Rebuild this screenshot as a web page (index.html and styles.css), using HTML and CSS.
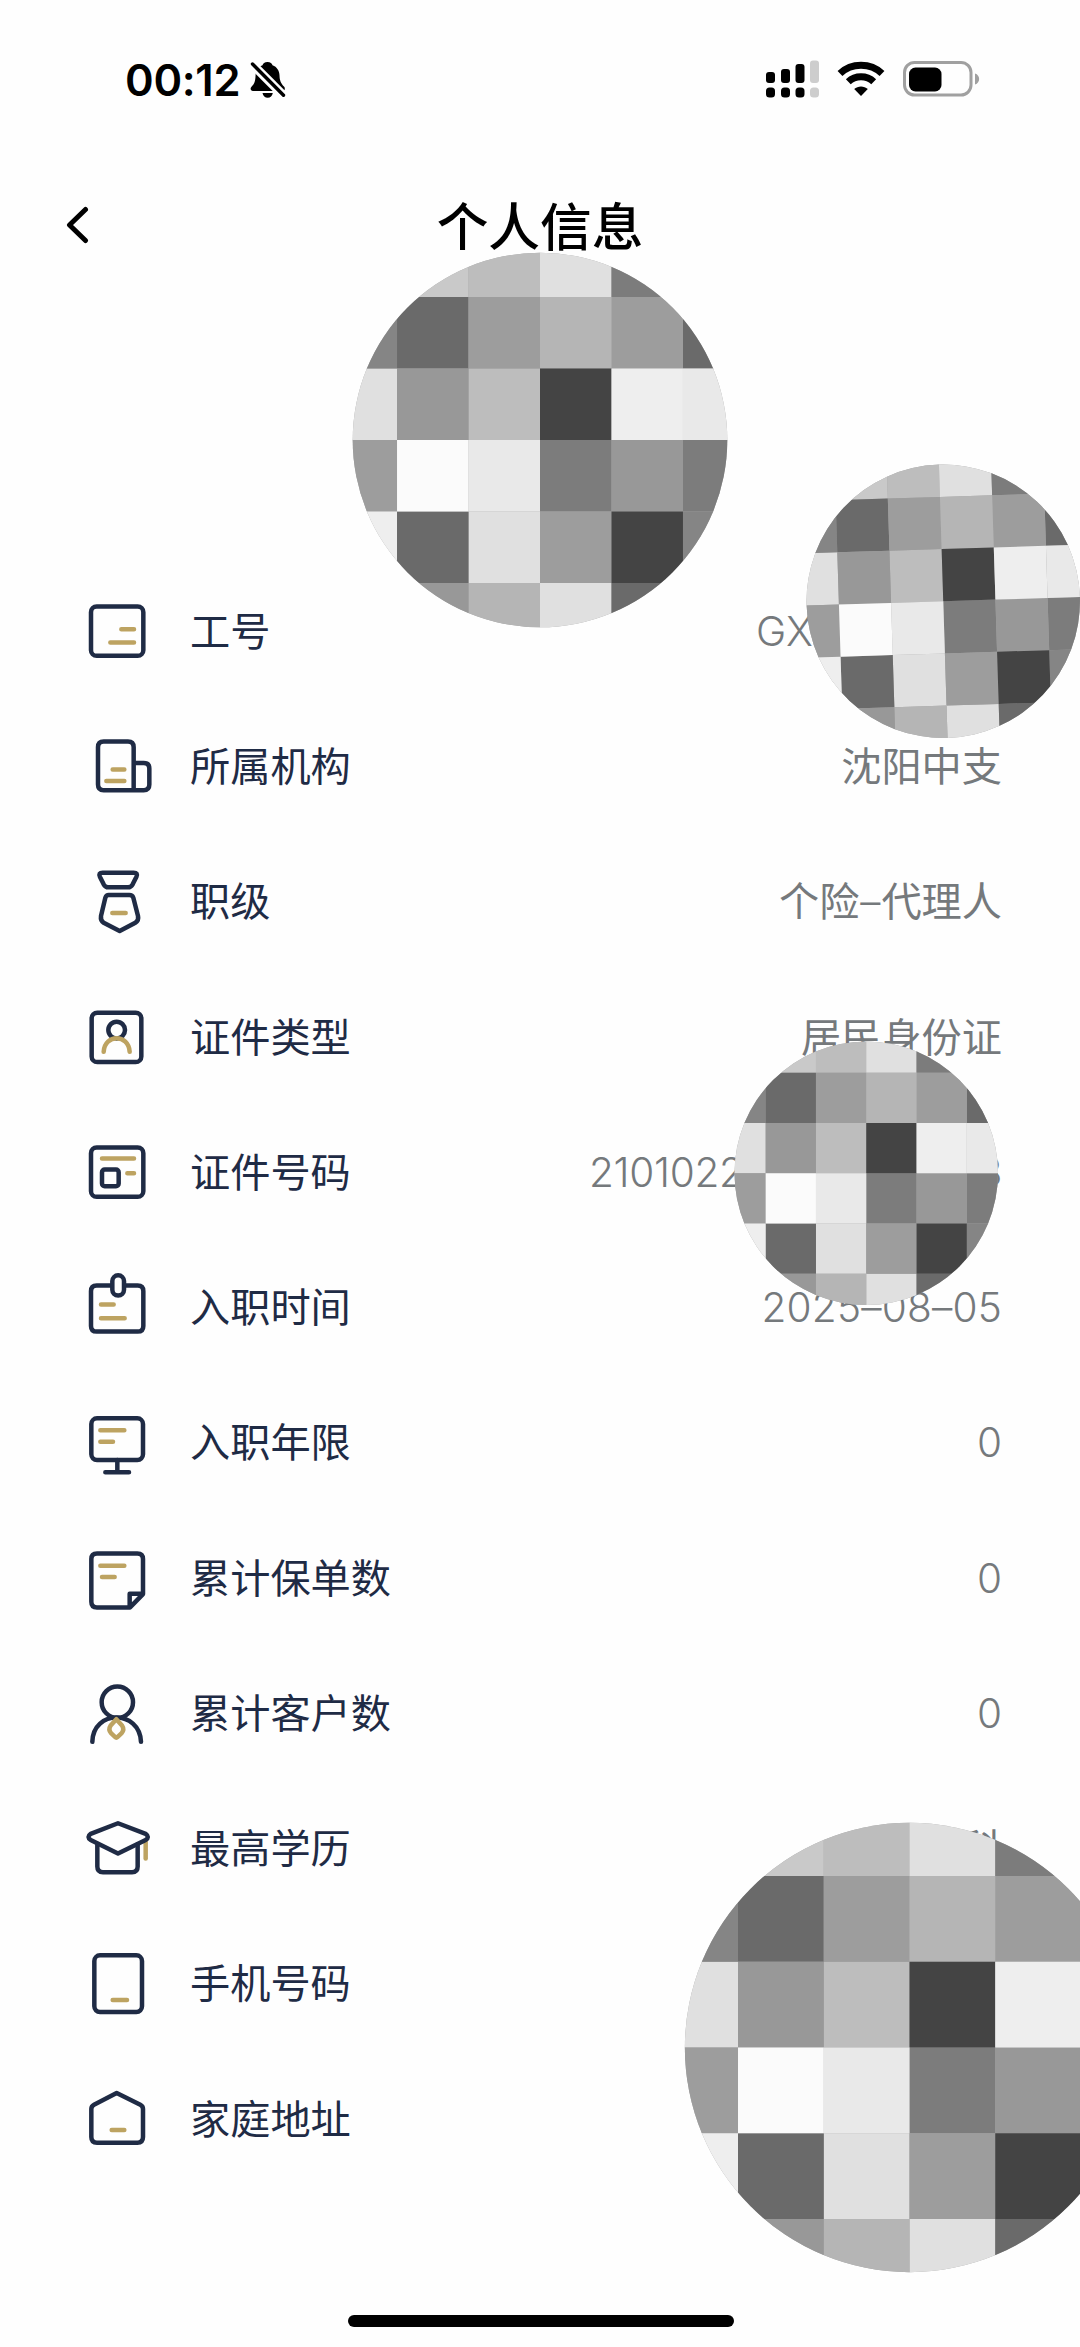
FILE: index.html
```html
<!DOCTYPE html>
<html lang="zh-CN">
<head>
<meta charset="utf-8">
<title>个人信息</title>
<link rel="stylesheet" href="styles.css">
</head>
<body>
<svg class="defs" aria-hidden="true">
  <symbol id="mosaic" viewBox="-2.63 -2.63 5.26 5.26">
    <clipPath id="disc"><circle r="2.62"/></clipPath>
    <g clip-path="url(#disc)">
      <rect x="-3" y="-3" width="6" height="6" fill="#a4a4a4"/>
      <path fill="#c9c9c9" d="M-2-3h1v1h-1z"/>
      <path fill="#bdbdbd" d="M-1-3h1v1h-1zM-1-1h1v1h-1z"/>
      <path fill="#e0e0e0" d="M0-3h1v1h-1zM-3-1h1v1h-1zM-1 1h1v1h-1zM0 2h1v1h-1z"/>
      <path fill="#7c7c7c" d="M1-3h1v1h-1zM0 0h1v1h-1zM2 0h1v1h-1z"/>
      <path fill="#858585" d="M-3-2h1v1h-1zM2 1h1v1h-1z"/>
      <path fill="#6a6a6a" d="M-2-2h1v1h-1zM2-2h1v1h-1zM-2 1h1v1h-1zM1 2h1v1h-1z"/>
      <path fill="#9d9d9d" d="M-1-2h1v1h-1zM1-2h1v1h-1zM-3 0h1v1h-1zM0 1h1v1h-1z"/>
      <path fill="#b5b5b5" d="M0-2h1v1h-1zM-1 2h1v1h-1z"/>
      <path fill="#989898" d="M-2-1h1v1h-1zM1 0h1v1h-1zM-2 2h1v1h-1z"/>
      <path fill="#444" d="M0-1h1v1h-1zM1 1h1v1h-1z"/>
      <path fill="#eee" d="M1-1h1v1h-1zM-3 1h1v1h-1z"/>
      <path fill="#e9e9e9" d="M2-1h1v1h-1zM-1 0h1v1h-1z"/>
      <path fill="#fbfbfb" d="M-2 0h1v1h-1z"/>
    </g>
  </symbol>
</svg>
<div class="screen">
  <header class="status">
    <span class="clock">00:12</span>
    <svg class="bell" viewBox="0 0 36 38">
      <path d="M17.500 1c3 0 4.500 1.600 5 3.200 4.500 1.600 6.800 5.500 7 10 .2 5 1 7.800 4.700 11.500.6.700.7 1.600.5 2.800-.2.900-.8 1.400-1.800 1.400H3c-2.400 0-3.200-2.600-1.500-4.200C4.700 22.600 5.300 20 5.600 14c.2-4.500 2.400-8.200 6.900-9.800.5-1.600 2-3.200 5-3.200zM12.500 32h10.300c-.6 3-2.400 4.700-5.100 4.700S13.100 35 12.500 32z"/>
      <path class="cut" d="M2 3l33 33"/>
      <path class="slash" d="M2.500 3l31 31.300"/>
    </svg>
    <svg class="signal" viewBox="0 0 54 38">
      <rect x="0" y="12" width="9" height="11" rx="3"/><rect x="15" y="9" width="9" height="14" rx="3"/><rect x="29.500" y="4" width="9" height="19" rx="3"/><rect class="off" x="44" y="0.500" width="9" height="22.500" rx="3"/>
      <rect x="0" y="27.500" width="9" height="10" rx="3.500"/><rect x="15" y="27.500" width="9" height="10" rx="3.500"/><rect x="29.500" y="27.500" width="9" height="10" rx="3.500"/><rect class="off" x="44" y="27.500" width="9" height="10" rx="3.500"/>
    </svg>
    <svg class="wifi" viewBox="0 0 48 36">
      <path class="arc" d="M3 12.500C14.500 1.500 33.500 1.500 45 12.500M11.300 20.800c7-6.700 18.400-6.700 25.400 0"/>
      <path d="M24 35l-6.800-6.900c3.800-3.400 9.800-3.400 13.600 0z"/>
    </svg>
    <svg class="battery" viewBox="0 0 78 36">
      <rect class="case" x="1.500" y="1.500" width="66.500" height="32.500" rx="10"/>
      <rect x="6" y="6.500" width="32.500" height="24" rx="6.500"/>
      <path class="nub" d="M72 12.500c5.500 1.500 5.500 9.500 0 11z"/>
    </svg>
  </header>
  <nav class="titlebar">
    <svg class="back" viewBox="0 0 24 40"><path d="M20.500 4.500L4.500 20l16 15.500"/></svg>
    <h1>个人信息</h1>
  </nav>
  <main class="list">
    <div class="row">
      <svg class="icon" viewBox="30 44.400 216 216"><rect x="63" y="79" width="157" height="148" rx="17"/><path class="gold" d="M154 147h38M121 187h71"/></svg>
      <span class="label">工号</span><span class="value num gx">GX</span>
    </div>
    <div class="row">
      <svg class="icon" viewBox="30 450.200 216 216"><path d="M101 485h73q17 0 17 17v129H101q-17 0-17-17V502q0-17 17-17zM191 549h30q17 0 17 17v48q0 17-17 17h-30"/><path class="gold" d="M128 569h35M109 603h54"/></svg>
      <span class="label">所属机构</span><span class="value">沈阳中支</span>
    </div>
    <div class="row">
      <svg class="icon" viewBox="30 855.900 216 216"><path d="M98 879h93q14 0 8 13l-11 22q-5 9-14 9h-59q-9 0-14-9l-11-22q-6-13 8-13zM116 946h62q9 0 12 8l14 55q3 14-8 20l-47 25-48-25q-10-6-8-20l13-55q3-8 10-8z"/><path class="gold" d="M127 1000h40"/></svg>
      <span class="label">职级</span><span class="value">个险<span class="dash">–</span>代理人</span>
    </div>
    <div class="row">
      <svg class="icon" viewBox="30 61.700 216 216"><rect x="65" y="97" width="149" height="148" rx="17"/><circle cx="140" cy="149" r="25"/><path class="gold" d="M101 214C104 160 176 160 179 214"/></svg>
      <span class="label">证件类型</span><span class="value">居民身份证</span>
    </div>
    <div class="row">
      <svg class="icon" viewBox="30 467.400 216 216"><rect x="63" y="502" width="157" height="148" rx="17"/><rect x="96" y="568" width="50" height="50" rx="8"/><path class="gold" d="M96 535h96M172 579h20"/></svg>
      <span class="label">证件号码</span><span class="value num idno"><span>2101022</span><span>3</span></span>
    </div>
    <div class="row">
      <svg class="icon" viewBox="30 873.200 216 216"><path d="M122 917H80q-17 0-17 17v104q0 17 17 17h123q17 0 17-17V934q0-17-17-17h-36"/><rect x="127" y="886" width="35" height="61" rx="17.500"/><path class="gold" d="M93 974h38M93 1015h71"/></svg>
      <span class="label">入职时间</span><span class="value num date">2025–08–05</span>
    </div>
    <div class="row">
      <svg class="icon" viewBox="30 48.900 216 216"><rect x="64" y="86" width="155" height="125" rx="17"/><path d="M142 211v37M106 248h71"/><path class="gold" d="M91 122h72M91 156h38"/></svg>
      <span class="label">入职年限</span><span class="value num">0</span>
    </div>
    <div class="row">
      <svg class="icon" viewBox="30 454.700 216 216"><path d="M81 489h121q17 0 17 17v105l-39 40H81q-17 0-17-17V506q0-17 17-17zM179 648v-38h37"/><path class="gold" d="M91 526h72M96 560h38"/></svg>
      <span class="label">累计保单数</span><span class="value num">0</span>
    </div>
    <div class="row">
      <svg class="icon" viewBox="30 860.400 216 216"><circle cx="142" cy="936" r="47"/><path d="M67 1055C69 958 209 958 213 1055"/><path class="gold" d="M139 987l17 19q8 12-1 23l-12 11q-4 4-8 0l-12-11q-9-11-1-23z"/></svg>
      <span class="label">累计客户数</span><span class="value num">0</span>
    </div>
    <div class="row">
      <svg class="icon" viewBox="30 36.200 216 216"><path class="gold" d="M227 125v51"/><path d="M82 133v67q0 17 17 17h87q17 0 17-17v-67"/><path d="M144 70l83 32q13 9 0 18l-83 41-82-41q-13-9 0-18z"/></svg>
      <span class="label">最高学历</span><span class="value">科</span>
    </div>
    <div class="row">
      <svg class="icon" viewBox="30 441.900 216 216"><rect x="73" y="467" width="143" height="170" rx="17"/><path class="gold" d="M128 601h43"/></svg>
      <span class="label">手机号码</span>
    </div>
    <div class="row">
      <svg class="icon" viewBox="30 847.700 216 216"><path d="M140 878l71 35q8 4 8 13v84q0 17-17 17H81q-17 0-17-17v-84q0-9 8-13z"/><path class="gold" d="M125 989h38"/></svg>
      <span class="label">家庭地址</span>
    </div>
  </main>
  <svg class="mask mask-avatar"><use href="#mosaic"/></svg>
  <svg class="mask mask-number"><use href="#mosaic"/></svg>
  <svg class="mask mask-id"><use href="#mosaic"/></svg>
  <svg class="mask mask-contact"><use href="#mosaic"/></svg>
  <div class="home"></div>
</div>
</body>
</html>
```
FILE: styles.css
```css
body { margin: 0; background: #fefefe; }
.defs { position: absolute; width: 0; height: 0; }
.screen {
  position: relative;
  box-sizing: border-box;
  width: 1080px;
  height: 2347px;
  overflow: hidden;
  display: flex;
  flex-direction: column;
  padding-bottom: 20px;
  font-family: Inter, "Noto Sans CJK SC", sans-serif;
}
.status {
  display: flex;
  align-items: center;
  height: 158px;
  padding: 0 99px 0 125px;
}
.clock { font-size: 43.5px; font-weight: 600; line-height: 60px; padding-top: 2px; letter-spacing: -0.3px; width: 125px; white-space: nowrap; }
.bell { width: 36px; height: 38px; margin-top: 2px; }
.cut { stroke: #fefefe; stroke-width: 9; }
.slash { stroke: #000; stroke-width: 3.4; stroke-linecap: round; }
.signal { width: 54px; height: 38px; margin-left: auto; }
.off { fill: #cdcdcd; }
.wifi { width: 48px; height: 36px; margin-left: 17px; }
.arc { fill: none; stroke: #000; stroke-width: 7; }
.battery { width: 78px; height: 36px; margin-left: 18px; }
.case { fill: none; stroke: #a0a0a0; stroke-width: 3; }
.nub { fill: #a0a0a0; }
.titlebar {
  display: grid;
  grid-template-columns: 1fr auto 1fr;
  align-items: center;
  height: 134px;
}
.back { width: 24px; height: 40px; margin-left: 65px; fill: none; stroke: #000; stroke-width: 5; stroke-linecap: round; stroke-linejoin: round; }
h1 { margin: 0; padding-top: 3px; font-size: 51.7px; font-weight: 500; line-height: 70px; color: #000; }
.list { padding: 271.2px 78px 0 80px; }
.row { display: flex; align-items: center; height: 135.25px; font-size: 40.2px; line-height: 60px; font-weight: 400; }
.icon { width: 72px; height: 72px; margin-right: 38px; fill: none; stroke: #1f2b45; stroke-width: 13.5; stroke-linecap: round; stroke-linejoin: round; }
.gold { stroke: #bda361; }
.label, .value { padding-top: 2px; }
.label { color: #1f2b45; }
.value { margin-left: auto; color: #75797c; }
.num { font-weight: 300; font-size: 40.6px; }
.dash { margin: 0 1px; font-weight: 300; }
.gx { width: 246px; }
.idno { display: flex; justify-content: space-between; width: 413px; letter-spacing: -0.3px; }
.date { letter-spacing: 0.2px; }
.mask { position: absolute; }
.mask-avatar { left: 352px; top: 252px; width: 376px; height: 376px; }
.mask-number { left: 806px; top: 463.5px; width: 274.5px; height: 274.5px; transform: rotate(-1.8deg); }
.mask-id { left: 733.5px; top: 1041px; width: 264.5px; height: 264.5px; }
.mask-contact { left: 683.5px; top: 1821.5px; width: 451px; height: 451px; }
.home { width: 386px; height: 12px; margin: auto auto 0 348px; border-radius: 6px; background: #000; }
```
